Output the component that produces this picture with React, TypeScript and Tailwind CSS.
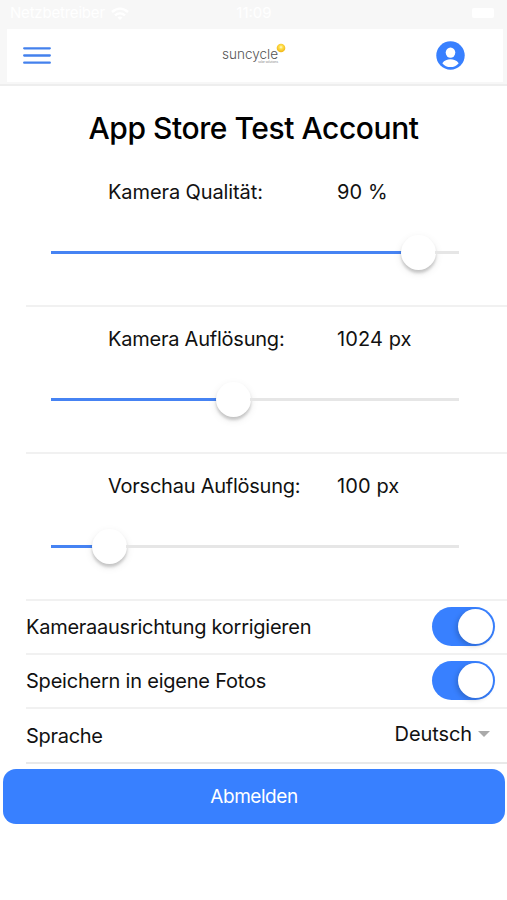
import React from 'react';

type SliderProps = { label: string; value: string; knob: number; labelClass: string; valueClass: string };

function SliderSection({ label, value, knob, labelClass, valueClass }: SliderProps) {
  return (
    <section className="ml-[26px] h-[147px] border-b-2 border-[#f1f1f1]">
      <div className="flex h-[65px] items-center pb-[2px] pl-[82px] text-[20px] leading-6">
        <span className="w-[229px] shrink-0 whitespace-nowrap"><span className={labelClass}>{label}</span></span>
        <span className={`whitespace-nowrap ${valueClass}`}>{value}</span>
      </div>
      <div className="ml-[25px] flex h-[54px] w-[408px] items-center">
        <div className="h-[3px] bg-[#4683f3]" style={{ width: knob - 17 }} />
        <div className="-mx-px mt-px size-[35px] shrink-0 rounded-full bg-white shadow-[0_3px_3px_rgba(0,0,0,0.18),0_3px_9px_rgba(0,0,0,0.09)]" />
        <div className="h-[3px] grow bg-[#e6e6e6]" />
      </div>
    </section>
  );
}

function ToggleRow({ label, labelClass }: { label: string; labelClass: string }) {
  return (
    <div className="ml-[26px] flex h-[54px] items-center justify-between border-b-2 border-[#f1f1f1] pr-3">
      <span className={`whitespace-nowrap text-[20px] leading-6 ${labelClass}`}>{label}</span>
      <div className="mb-px flex h-[39px] w-[63px] items-center justify-end rounded-full bg-[#3880ff] pr-[2px]">
        <div className="size-[35px] rounded-full bg-white shadow-[-2px_2px_5px_rgba(0,0,0,0.18)]" />
      </div>
    </div>
  );
}

function Logo() {
  return (
    <svg width="68" height="26" viewBox="0 0 68 26" className="ml-[23px]">
      <defs>
        <radialGradient id="sun" cx="0.5" cy="0.4" r="0.6">
          <stop offset="0" stopColor="#fffbd8" />
          <stop offset="0.35" stopColor="#ffdf4a" />
          <stop offset="1" stopColor="#f0b314" />
        </radialGradient>
      </defs>
      <text x="1" y="16" fontSize="13.5" fontFamily="Inter, sans-serif" fontWeight="300" fill="#555" textLength="56" lengthAdjust="spacingAndGlyphs">suncycle</text>
      <text x="37" y="20" fontSize="3" fontFamily="Inter, sans-serif" fill="#888" textLength="20">solar solutions</text>
      <circle cx="60" cy="5" r="4.3" fill="url(#sun)" />
    </svg>
  );
}

export default function App() {
  return (
    <main className="h-[900px] w-[507px] overflow-hidden bg-white font-['Inter','Liberation_Sans',sans-serif] text-[#111]">
      <header className="h-[86px] border-b-2 border-[#eeeeee] bg-[#f7f7f7] pl-[7px] pr-1">
        <div className="flex h-[29px] items-center justify-between pl-[3px] pr-[5px] text-[15px] text-white">
          <div className="flex w-[220px] items-center gap-[6px] pb-[2px]">
            <span className="tracking-[-0.2px]">Netzbetreiber</span>
            <svg width="18" height="14" viewBox="0 0 18 14" fill="none" stroke="white" strokeWidth="2.4">
              <path d="M1 5C6 .5 12 .5 17 5M4 8.3C7 5.8 11 5.8 14 8.3" />
              <path d="m6.5 10.5 2.5 2.5 2.5-2.5C10 9.2 8 9.2 6.5 10.5Z" fill="white" stroke="none" />
            </svg>
          </div>
          <span className="pb-[2px]">11:09</span>
          <div className="flex w-[220px] justify-end pb-[3px] pr-1"><div className="h-[10px] w-[22px] rounded-[2px] bg-white" /></div>
        </div>
        <div className="flex h-[53px] items-center justify-between bg-white pl-[16px] pr-[38px]">
          <svg width="28" height="19" viewBox="0 0 28 19" stroke="#4481ed" strokeWidth="2.3" strokeLinecap="round">
            <path d="M1.2 2.3h25.6M1.2 9.5h25.6M1.2 16.7h25.6" />
          </svg>
          <Logo />
          <svg width="29" height="29" viewBox="0 0 29 29" className="-mt-px">
            <circle cx="14.5" cy="14.5" r="14.2" fill="#3880ff" />
            <ellipse cx="14.5" cy="11.6" rx="4.8" ry="5.2" fill="white" />
            <path d="M6.3 22.2c2.1-3 5-4 8.2-4s6.1 1 8.2 4c-2.2 2.6-5 3.9-8.2 3.9s-6-1.3-8.2-3.9Z" fill="white" />
          </svg>
        </div>
      </header>
      <h1 className="flex h-[74px] items-center justify-center pt-[10px] text-[30px] font-medium tracking-[-0.44px] text-black">App Store Test Account</h1>
      <SliderSection label="Kamera Qualität:" value="90 %" knob={368} labelClass="tracking-[-0.1px]" valueClass="tracking-[0.1px]" />
      <SliderSection label="Kamera Auflösung:" value="1024 px" knob={183} labelClass="tracking-[-0.23px]" valueClass="tracking-[0.1px]" />
      <SliderSection label="Vorschau Auflösung:" value="100 px" knob={59} labelClass="tracking-[-0.24px]" valueClass="tracking-[0.1px]" />
      <ToggleRow label="Kameraausrichtung korrigieren" labelClass="tracking-[-0.26px]" />
      <ToggleRow label="Speichern in eigene Fotos" labelClass="tracking-[-0.22px]" />
      <div className="ml-[26px] flex h-[55px] items-center justify-between border-b-2 border-[#e9e9e9] pr-[17px] text-[20px]">
        <span className="tracking-[-0.3px]">Sprache</span>
        <div className="flex items-center gap-[6px] pb-[3px]">
          <span className="tracking-[-0.1px]">Deutsch</span>
          <span className="border-x-[6px] border-t-[6px] border-x-transparent border-t-[#aaa]" />
        </div>
      </div>
      <button className="ml-[3px] mt-[5px] flex h-[55px] w-[502px] items-center justify-center rounded-[13px] bg-[#3880ff] pt-[2px] text-[19px] tracking-[-0.45px] text-white">Abmelden</button>
    </main>
  );
}
